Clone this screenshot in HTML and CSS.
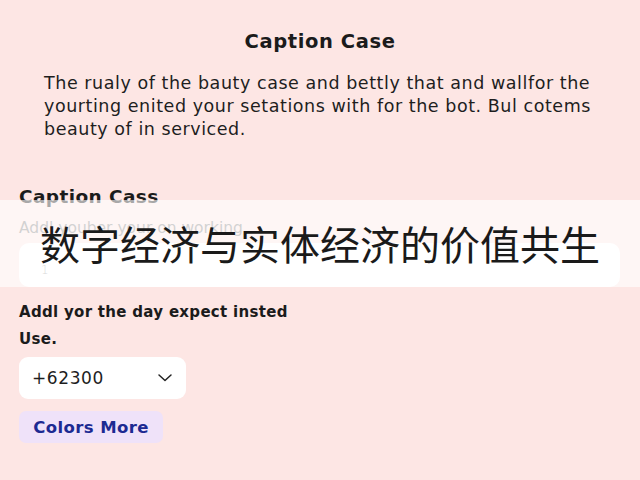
FILE: index.html
```html
<!DOCTYPE html>
<html lang="en">
<head>
<meta charset="utf-8">
<link rel="stylesheet" href="styles.css">
</head>
<body>
<div class="page">
  <h1 class="title">Caption Case</h1>
  <p class="intro">The rualy of the bauty case and bettly that and wallfor the yourting enited your setations with for the bot. Bul cotems beauty of in serviced.</p>

  <div class="group">
    <h2 class="label">Caption Cass</h2>
    <div class="hint">Addl youber your on working</div>
    <div class="input"><span class="caret">1</span></div>
  </div>

  <div class="group2">
    <div class="label2">Addl yor the day expect insted</div>
    <div class="label2">Use.</div>
    <div class="select">
      <span>+62300</span>
      <svg class="chev" width="16" height="10" viewBox="0 0 16 10"><path d="M2 2 L8 7.5 L14 2" fill="none" stroke="#222" stroke-width="1.5" stroke-linecap="round" stroke-linejoin="round"/></svg>
    </div>
    <button class="btn">Colors More</button>
  </div>

  <div class="overlay"><span class="zh">数字经济与实体经济的价值共生</span></div>
</div>
</body>
</html>
```
FILE: styles.css
```css
html, body {
  margin: 0;
  padding: 0;
}
body {
  background: #fde6e4;
  font-family: "DejaVu Sans", "Open Sans", sans-serif;
  color: #1b1b1b;
  width: 640px;
  height: 480px;
  overflow: hidden;
}
.page {
  position: relative;
  height: 480px;
  padding: 0 19px;
  box-sizing: border-box;
}
.title {
  margin: 0;
  padding-top: 30px;
  font-size: 19.5px;
  letter-spacing: 0.6px;
  line-height: 24px;
  font-weight: 700;
  text-align: center;
}
.intro {
  margin: 17.5px 0 0 0;
  padding: 0 10px 0 25px;
  font-size: 17.5px;
  letter-spacing: 0.55px;
  line-height: 23px;
  color: #1e1e1e;
}
.group {
  margin-top: 46.5px;
}
.label {
  margin: 0;
  font-size: 18.5px;
  letter-spacing: 0.4px;
  line-height: 20px;
  font-weight: 700;
}
.hint {
  margin-top: 12px;
  font-size: 15.5px;
  line-height: 18px;
  color: #8a8a8a;
}
.input {
  margin-top: 6px;
  height: 44px;
  background: #ffffff;
  border-radius: 10px;
  display: flex;
  align-items: center;
  padding-left: 22px;
  margin-right: 1px;
}
.caret {
  font-size: 12px;
  color: #9a9a9a;
  font-weight: 300;
  margin-top: 10px;
}
.group2 {
  margin-top: 11.5px;
}
.label2 {
  font-size: 15px;
  letter-spacing: 0.3px;
  font-weight: 700;
  line-height: 27px;
  color: #1b1b1b;
}
.select {
  margin-top: 4.5px;
  width: 167px;
  height: 42px;
  background: #ffffff;
  border-radius: 9px;
  display: flex;
  align-items: center;
  justify-content: space-between;
  padding: 0 13px 0 13px;
  box-sizing: border-box;
  font-size: 17px;
  letter-spacing: 0.6px;
  color: #1e1e1e;
}
.chev {
  display: block;
}
.btn {
  margin-top: 12px;
  width: 144px;
  height: 32px;
  border: none;
  border-radius: 7px;
  background: #efe2f9;
  color: #1c2a92;
  font-family: "DejaVu Sans", "Open Sans", sans-serif;
  font-weight: 700;
  font-size: 16.5px;
  letter-spacing: 0.4px;
  padding: 0;
  display: block;
}
.overlay {
  position: absolute;
  left: 0;
  top: 200px;
  width: 640px;
  height: 87px;
  background: rgba(255, 255, 255, 0.62);
  display: flex;
  align-items: center;
  justify-content: center;
}
.zh {
  font-family: "Noto Sans CJK SC", sans-serif;
  font-size: 40px;
  font-weight: 400;
  white-space: nowrap;
  color: #1a1a1a;
  margin-top: -2px;
}
```
